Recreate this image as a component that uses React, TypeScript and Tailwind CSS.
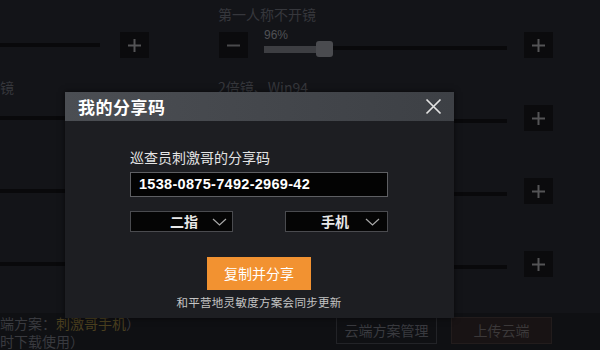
const CJK = "font-['Noto_Sans_CJK_SC','Noto_Sans',sans-serif]";

function PlusBox() {
  return (
    <div className="flex h-[26px] w-[29px] items-center justify-center bg-[#0b0b0d]">
      <svg width="15" height="15" viewBox="0 0 15 15">
        <path d="M7.5 1v13M1 7.5h13" stroke="#545456" strokeWidth="2" fill="none" />
      </svg>
    </div>
  );
}

function MinusBox() {
  return (
    <div className="flex h-[26px] w-[29px] items-center justify-center bg-[#0b0b0d]">
      <svg width="15" height="15" viewBox="0 0 15 15">
        <path d="M1 7.5h13" stroke="#4a4a4c" strokeWidth="2" fill="none" />
      </svg>
    </div>
  );
}

function Chevron() {
  return (
    <svg width="15" height="8" viewBox="0 0 15 8">
      <polyline points="1,1 7.5,7 14,1" stroke="#a8a8a8" strokeWidth="1.2" fill="none" />
    </svg>
  );
}

// one settings row of the game screen behind the dialog
function SettingRow({ label, left, value, pct }: { label?: string; left?: string; value?: string; pct?: boolean }) {
  return (
    <div className="flex h-[73px] flex-col">
      <div className={`flex h-[32px] pt-[6px] text-[14px] leading-[16px] text-[#36373c] ${CJK}`}>
        <span className="w-[218px]">{left}</span>
        <span>{label}</span>
      </div>
      <div className="flex h-[26px] items-center">
        <div className="h-[4px] w-[100px] bg-[#09090b]" />
        <div className="ml-[20px]">
          <PlusBox />
        </div>
        <div className="ml-[70px]">
          <MinusBox />
        </div>
        <div className="relative ml-[16px] flex h-[26px] w-[243px] items-center">
          {pct && (
            <>
              <span className="absolute left-0 top-[-6px] text-[12px] font-['Liberation_Sans',sans-serif] text-[#505155]">
                {value}
              </span>
              <div className="mt-[8px] h-[7px] w-[52px] bg-[#3d3e42]" />
              <div className="mt-[8px] h-[16px] w-[17px] rounded-[3px] bg-[#4a4b4f]" />
            </>
          )}
          <div className="mt-[6px] h-[4px] flex-1 bg-[#09090b]" />
        </div>
        <div className="ml-[17px]">
          <PlusBox />
        </div>
      </div>
    </div>
  );
}

export default function App() {
  return (
    <div className={`relative h-[350px] w-[600px] overflow-hidden bg-[#131418] ${CJK}`}>
      {/* game settings behind */}
      <div className="flex flex-col">
        <SettingRow label="第一人称不开镜" value="96%" pct />
        <SettingRow left="镜" label="2倍镜、Win94" />
        <SettingRow />
        <SettingRow />
        <div className="mt-[21px] flex h-[37px] bg-[#0f1013]">
          <div className="flex w-[336px] flex-col pt-[1px] text-[14px] text-[#393a3f]">
            <span className="h-[18px] leading-[18px]">
              端方案：<span className="text-[#4a3f1f]">刺激哥手机</span>）
            </span>
            <span className="h-[18px] leading-[18px]">时下载使用）</span>
          </div>
          <div className="mt-[4px] flex h-[27px] w-[101px] items-center justify-center border border-[#222327] text-[14px] text-[#393a3f]">
            云端方案管理
          </div>
          <div className="ml-[14px] mt-[4px] flex h-[27px] w-[101px] items-center justify-center border border-[#221c1c] bg-[#181314] text-[14px] text-[#3b3839]">
            上传云端
          </div>
        </div>
      </div>

      {/* share code dialog */}
      <div className="absolute left-[65px] top-[92px] flex h-[226px] w-[389px] flex-col bg-[#1d1e22] shadow-[0_0_6px_rgba(0,0,0,0.6)]">
        <div className="flex h-[29px] items-center justify-between bg-gradient-to-r from-[#4b4e53] via-[#44474c] to-[#3d4045] pl-[13px] pr-[12px]">
          <span className="text-[17px] font-bold tracking-[0.5px] text-white">我的分享码</span>
          <svg width="17" height="17" viewBox="0 0 17 17">
            <path d="M1.5 1.5l14 14M15.5 1.5l-14 14" stroke="#e2e2e2" strokeWidth="1.7" fill="none" />
          </svg>
        </div>
        <div className="flex w-[323px] flex-col pl-[65px]">
          <span className="mt-[28px] text-[14px] leading-[16px] text-[#e4e4e4]">巡查员刺激哥的分享码</span>
          <div className="mt-[7px] flex h-[25px] w-[258px] items-center border border-[#5e5f63] bg-[#030303] pl-[8px]">
            <span className="font-['Liberation_Sans',sans-serif] text-[14.5px] font-bold tracking-[0.3px] text-white">
              1538-0875-7492-2969-42
            </span>
          </div>
          <div className="mt-[14px] flex justify-between">
            <div className="flex h-[21px] w-[103px] items-center border border-[#4a4b4f] bg-[#050505]">
              <span className="ml-[39px] text-[14px] font-bold text-[#e8e8e8]">二指</span>
              <span className="ml-[14px] flex"><Chevron /></span>
            </div>
            <div className="flex h-[21px] w-[103px] items-center border border-[#4a4b4f] bg-[#050505]">
              <span className="ml-[35px] text-[14px] font-bold text-[#e8e8e8]">手机</span>
              <span className="ml-[16px] flex"><Chevron /></span>
            </div>
          </div>
          <div className="mx-auto mt-[25px] flex h-[33px] w-[104px] items-center justify-center bg-[#f29231] text-[14px] text-white">
            复制并分享
          </div>
          <span className="mt-[5px] text-center text-[11.5px] leading-[14px] tracking-[0.3px] text-[#c4c4c4]">
            和平营地灵敏度方案会同步更新
          </span>
        </div>
      </div>
    </div>
  );
}
